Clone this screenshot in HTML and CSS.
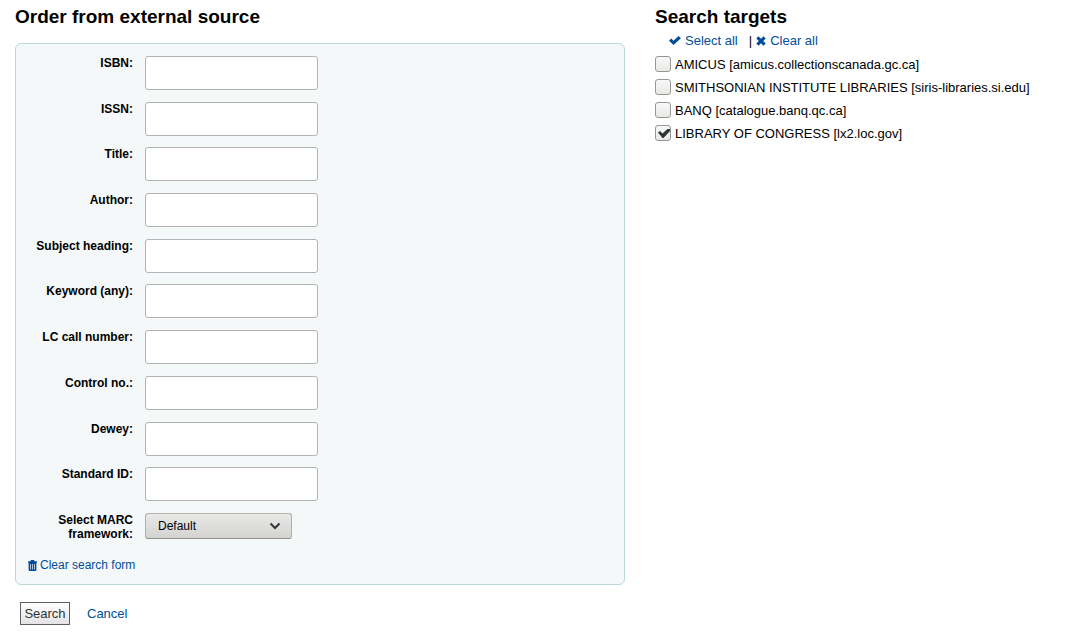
FILE: index.html
```html
<!DOCTYPE html>
<html lang="en">
<head>
<meta charset="utf-8">
<title>Order from external source</title>
<link rel="stylesheet" href="styles.css">
</head>
<body>
<form class="page">
  <section class="order">
    <h1 class="heading">Order from external source</h1>
    <div class="panel">
      <ol class="fields">
        <li class="field"><label class="field-label" for="isbn">ISBN:</label><input class="text" type="text" id="isbn"></li>
        <li class="field"><label class="field-label" for="issn">ISSN:</label><input class="text" type="text" id="issn"></li>
        <li class="field"><label class="field-label" for="title">Title:</label><input class="text" type="text" id="title"></li>
        <li class="field"><label class="field-label" for="author">Author:</label><input class="text" type="text" id="author"></li>
        <li class="field"><label class="field-label" for="subject">Subject heading:</label><input class="text" type="text" id="subject"></li>
        <li class="field"><label class="field-label" for="keyword">Keyword (any):</label><input class="text" type="text" id="keyword"></li>
        <li class="field"><label class="field-label" for="lccall">LC call number:</label><input class="text" type="text" id="lccall"></li>
        <li class="field"><label class="field-label" for="control">Control no.:</label><input class="text" type="text" id="control"></li>
        <li class="field"><label class="field-label" for="dewey">Dewey:</label><input class="text" type="text" id="dewey"></li>
        <li class="field"><label class="field-label" for="stdid">Standard ID:</label><input class="text" type="text" id="stdid"></li>
        <li class="field">
          <label class="field-label" for="framework">Select MARC framework:</label>
          <span class="select-box">
            <select class="select" id="framework"><option>Default</option></select>
            <svg class="chevron" viewBox="0 0 12 8" aria-hidden="true"><path d="M1.500 1.500 6 6l4.500-4.500"/></svg>
          </span>
        </li>
      </ol>
      <a class="link clear-form" href="#"><svg class="trash" viewBox="0 0 9 11" aria-hidden="true"><path fill-rule="evenodd" d="M3 0h3l.6 1.200H9v1.300H0V1.200h2.400zM.6 2.500h7.800V10q0 1-1 1H1.600q-1 0-1-1zM2.200 4v5.500h.7V4zM4.150 4v5.500h.7V4zM6.100 4v5.500h.7V4z"/></svg>Clear search form</a>
    </div>
    <div class="actions">
      <button class="search" type="submit">Search</button>
      <a class="link" href="#">Cancel</a>
    </div>
  </section>
  <section class="targets">
    <h2 class="heading">Search targets</h2>
    <div class="tools">
      <a class="link" href="#"><svg class="check-icon" viewBox="0 0 12 9" aria-hidden="true"><path d="M0 4.800 2.200 2.600 4.500 4.800 9.600 0 11.900 2.200 4.500 9z"/></svg>Select all</a>
      <span class="divider">|</span>
      <a class="link" href="#"><svg class="cross-icon" viewBox="0 0 10 10" aria-hidden="true"><path d="M.3 2.500 2.500.3 5 2.800 7.500.3 9.700 2.500 7.200 5 9.700 7.500 7.500 9.700 5 7.200 2.500 9.700.3 7.500 2.800 5z"/></svg>Clear all</a>
    </div>
    <ul class="target-list">
      <li><label class="target"><input class="box" type="checkbox">AMICUS [amicus.collectionscanada.gc.ca]</label></li>
      <li><label class="target"><input class="box" type="checkbox">SMITHSONIAN INSTITUTE LIBRARIES [siris-libraries.si.edu]</label></li>
      <li><label class="target"><input class="box" type="checkbox">BANQ [catalogue.banq.qc.ca]</label></li>
      <li><label class="target"><input class="box" type="checkbox" checked><svg class="tick" viewBox="0 0 16 16" aria-hidden="true"><path d="M3 7.500 5 6 7.500 8.500 12.500 4H15v2L8.500 13H7.500z"/></svg>LIBRARY OF CONGRESS [lx2.loc.gov]</label></li>
    </ul>
  </section>
</form>
</body>
</html>
```

FILE: styles.css
```css
* { box-sizing: border-box; }

body {
  margin: 0;
  background: #fff;
  color: #000;
  font: 13px/15px "Liberation Sans", Arial, sans-serif;
}

.page {
  display: grid;
  grid-template-columns: 610fr 391fr;
  column-gap: 30px;
  padding: 5px 30px 8px 15px;
}

.heading {
  margin: 0;
  font-size: 19px;
  line-height: 24px;
}

.panel {
  margin-top: 14px;
  padding: 12px 12px 10px;
  border: 1px solid #b9d8d9;
  border-radius: 6px;
  background: #f4f8f9;
  font-size: 12px;
  line-height: 14px;
}

.fields {
  display: flex;
  flex-direction: column;
  justify-content: space-between;
  min-height: 485px;
  margin: 0;
  padding: 0;
  list-style: none;
}

.field {
  display: flex;
  align-items: flex-start;
  gap: 12px;
}

.field-label {
  width: 105px;
  font-weight: bold;
  text-align: right;
}

.text {
  width: 173px;
  height: 34px;
  padding: 4px 8px;
  border: 1px solid #b3b3b3;
  border-radius: 3px;
  background: #fff;
  font: inherit;
}

.select-box { position: relative; }

.select {
  display: block;
  width: 147px;
  height: 26px;
  padding: 0 12px;
  appearance: none;
  border: 1px solid #b0b0ad;
  border-bottom-color: #92928f;
  border-radius: 3px;
  background: linear-gradient(#e8e8e7, #d3d3d0);
  color: #000;
  font: inherit;
}

.chevron {
  position: absolute;
  top: 9px;
  right: 11px;
  width: 12px;
  height: 8px;
  fill: none;
  stroke: #31363b;
  stroke-width: 2;
  pointer-events: none;
}

.link {
  color: #004d99;
  text-decoration: none;
}

.link svg { fill: currentColor; }

.clear-form {
  display: inline-flex;
  align-items: center;
  gap: 3px;
  margin-top: 17px;
}

.trash { width: 9px; height: 11px; }

.actions {
  display: flex;
  align-items: center;
  gap: 17px;
  padding: 17px 5px 0;
}

.search {
  min-width: 50px;
  height: 23px;
  padding: 0 3px;
  border: 1px solid #5f5f62;
  border-radius: 0;
  background: linear-gradient(#fff, #e3e3e6);
  color: #333;
  font: inherit;
}

.tools {
  display: flex;
  gap: 4px;
  margin: 4px 0 0 14px;
}

.tools .link {
  display: flex;
  align-items: center;
  gap: 4px;
}

.check-icon { width: 12px; height: 9px; }
.cross-icon { width: 10px; height: 10px; }
.divider { padding-left: 7px; }

.target-list {
  display: grid;
  gap: 7px;
  margin: 8px 0 0;
  padding: 0;
  list-style: none;
}

.target {
  position: relative;
  display: flex;
  align-items: center;
  gap: 4px;
}

.box {
  width: 16px;
  height: 16px;
  margin: 0;
  appearance: none;
  border: 1px solid #969693;
  border-radius: 3px;
  background: linear-gradient(#f8f8f8, #e8e8e7);
}

.tick {
  position: absolute;
  top: 0;
  left: 0;
  width: 16px;
  height: 16px;
  fill: #2e3436;
  pointer-events: none;
}
```
